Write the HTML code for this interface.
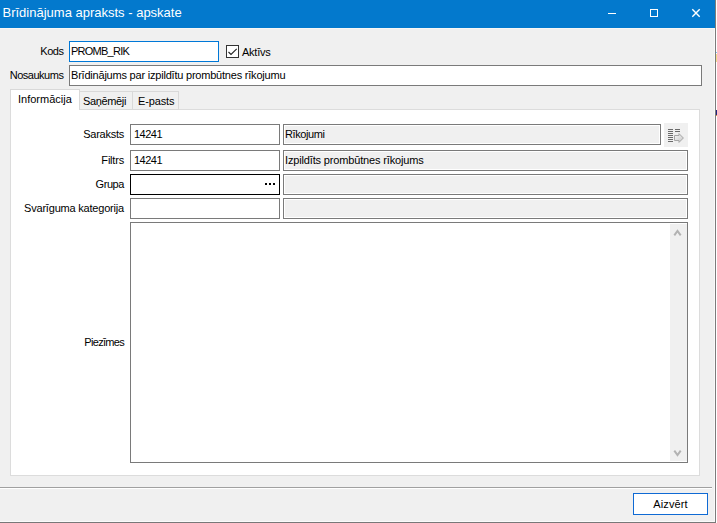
<!DOCTYPE html>
<html lang="lv">
<head>
<meta charset="utf-8">
<title>Brīdinājuma apraksts - apskate</title>
<style>
html,body{margin:0;padding:0;}
body{width:717px;height:523px;overflow:hidden;background:#fff;position:relative;
 font-family:"Liberation Sans",sans-serif;font-size:11px;color:#000;}
.abs{position:absolute;box-sizing:border-box;}
#win{left:0;top:0;width:715px;height:522px;background:#f0f0f0;}
#title{left:0;top:0;width:715px;height:28px;background:#0379cd;}
#ttext{left:2.5px;top:0;height:28px;line-height:25px;color:#fff;font-size:13px;white-space:nowrap;}
.t{position:absolute;white-space:nowrap;line-height:13px;height:13px;}
.r{text-align:right;}
.in{position:absolute;box-sizing:border-box;background:#fff;border:1px solid #7a7a7a;height:21px;}
.dis{position:absolute;box-sizing:border-box;background:#f0f0f0;border:1px solid #7a7a7a;box-shadow:inset 0 0 0 1px #fff;height:21px;}
</style>
</head>
<body>
<div id="win" class="abs"></div>
<div class="abs" style="left:715px;top:0;width:1px;height:523px;background:#7c7c7c"></div>
<div class="abs" style="left:0;top:521px;width:715px;height:1px;background:#fafafa"></div>
<div class="abs" style="left:714px;top:28px;width:1px;height:494px;background:#fafafa"></div>
<div class="abs" style="left:0;top:522px;width:716px;height:1px;background:#787878"></div>

<div class="abs" style="left:716px;top:54px;width:1px;height:8px;background:#f3dc8e"></div>
<div class="abs" style="left:716px;top:110px;width:1px;height:5px;background:#22227c"></div>
<div class="abs" style="left:716px;top:115px;width:1px;height:1px;background:#e0903c"></div>
<div class="abs" style="left:716px;top:52px;width:1px;height:1px;background:#7cc8f4"></div>
<div class="abs" style="left:0;top:28px;width:715px;height:1px;background:#f8f7f5"></div>
<div id="title" class="abs"></div>
<div id="ttext" class="abs"><span id="s_title">Brīdinājuma apraksts - apskate</span></div>
<!-- window buttons -->
<svg class="abs" style="left:600px;top:0" width="115" height="28" viewBox="0 0 115 28">
 <rect x="8" y="13" width="8" height="1" fill="#fff"/>
 <rect x="50.5" y="9.5" width="7" height="7" fill="none" stroke="#fff" stroke-width="1"/>
 <path d="M92.3 9.3 L99.7 16.7 M99.7 9.3 L92.3 16.7" stroke="#fff" stroke-width="1.4" fill="none"/>
</svg>

<!-- header fields -->
<div class="t r" style="left:0;width:63.4px;top:45px"><span id="s_kods" style="letter-spacing:-0.5px">Kods</span></div>
<div class="in" style="left:69px;top:41px;width:150px;border-color:#0078d7"></div>
<div class="t" style="left:71px;top:45px"><span id="s_promb" style="letter-spacing:-0.75px">PROMB_RIK</span></div>
<div class="abs" style="left:226px;top:45px;width:13px;height:13px;background:#fff;border:1px solid #333"></div>
<svg class="abs" style="left:226px;top:45px" width="13" height="13" viewBox="0 0 13 13"><path d="M2.5 7 L5 9.5 L10.7 3.8" stroke="#222" stroke-width="1.1" fill="none"/></svg>
<div class="t" style="left:242px;top:46px"><span id="s_aktivs" style="letter-spacing:-0.25px">Aktīvs</span></div>

<div class="t r" style="left:0;width:63.4px;top:69px"><span id="s_nos" style="letter-spacing:-0.5px">Nosaukums</span></div>
<div class="in" style="left:69px;top:65px;width:633px"></div>
<div class="t" style="left:71px;top:69px"><span id="s_nosv" style="letter-spacing:-0.21px">Brīdinājums par izpildītu prombūtnes rīkojumu</span></div>

<!-- tabs -->
<div class="abs" style="left:10px;top:109px;width:690px;height:367px;background:#fff;border:1px solid #dcdcdc"></div>
<div class="abs" style="left:79px;top:91px;width:54px;height:19px;background:#f0f0f0;border:1px solid #d9d9d9;border-left:none"></div>
<div class="abs" style="left:133px;top:91px;width:46px;height:19px;background:#f0f0f0;border:1px solid #d9d9d9;border-left:none"></div>
<div class="abs" style="left:10px;top:89px;width:70px;height:21px;background:#fff;border:1px solid #d9d9d9;border-bottom:none"></div>
<div class="t" style="left:18px;top:93px"><span id="s_tab1">Informācija</span></div>
<div class="t" style="left:83px;top:95px"><span id="s_tab2" style="letter-spacing:-0.36px">Saņēmēji</span></div>
<div class="t" style="left:138px;top:95px"><span id="s_tab3" style="letter-spacing:-0.14px">E-pasts</span></div>

<!-- rows -->
<div class="t r" style="left:0;width:124px;top:128px"><span id="s_sar" style="letter-spacing:-0.26px">Saraksts</span></div>
<div class="in" style="left:130px;top:124px;width:150px"></div>
<div class="t" style="left:134px;top:128px"><span id="s_n1" style="letter-spacing:-0.5px">14241</span></div>
<div class="dis" style="left:283px;top:124px;width:378px"></div>
<div class="t" style="left:285px;top:128px"><span id="s_rik" style="letter-spacing:-0.42px">Rīkojumi</span></div>
<div class="abs" style="left:664px;top:123px;width:24px;height:24px;background:#f0f0f0"></div>
<svg class="abs" style="left:664px;top:123px" width="24" height="24" viewBox="0 0 24 24">
 <g fill="#6a6a6a">
 <rect x="4" y="6" width="5" height="1"/><rect x="4" y="8" width="5" height="1"/><rect x="4" y="10" width="5" height="1"/>
 <rect x="4" y="12" width="5" height="1"/><rect x="4" y="14" width="5" height="1"/><rect x="4" y="16" width="5" height="1"/><rect x="4" y="18" width="5" height="1"/>
 <rect x="11" y="6" width="5" height="1"/><rect x="11" y="8" width="5" height="1"/>
 </g>
 <defs><linearGradient id="ag" x1="0" y1="0" x2="1" y2="1"><stop offset="0" stop-color="#fafafa"/><stop offset="1" stop-color="#c4c4c4"/></linearGradient></defs>
 <path d="M10.5 12.5 H15 V10.6 L19.4 15 L15 19.4 V17.5 H10.5 Z" fill="url(#ag)" stroke="#a6a6a6" stroke-width="1"/>
</svg>

<div class="t r" style="left:0;width:124px;top:154px"><span id="s_fil" style="letter-spacing:-0.2px">Filtrs</span></div>
<div class="in" style="left:130px;top:150px;width:150px"></div>
<div class="t" style="left:134px;top:154px"><span id="s_n2" style="letter-spacing:-0.5px">14241</span></div>
<div class="dis" style="left:283px;top:150px;width:405px"></div>
<div class="t" style="left:285px;top:154px"><span id="s_izp" style="letter-spacing:-0.155px">Izpildīts prombūtnes rīkojums</span></div>

<div class="t r" style="left:0;width:124px;top:178px"><span id="s_gru" style="letter-spacing:-0.42px">Grupa</span></div>
<div class="in" style="left:130px;top:174px;width:150px;border-color:#000"></div>
<div class="abs" style="left:265px;top:183px;width:2px;height:2px;background:#000"></div>
<div class="abs" style="left:269px;top:183px;width:2px;height:2px;background:#000"></div>
<div class="abs" style="left:273px;top:183px;width:2px;height:2px;background:#000"></div>
<div class="dis" style="left:283px;top:174px;width:405px"></div>

<div class="t r" style="left:0;width:124px;top:202px"><span id="s_sva" style="letter-spacing:-0.2px">Svarīguma kategorija</span></div>
<div class="in" style="left:130px;top:198px;width:150px"></div>
<div class="dis" style="left:283px;top:198px;width:405px"></div>

<div class="t r" style="left:0;width:124px;top:336px"><span id="s_pie" style="letter-spacing:-0.7px">Piezīmes</span></div>
<div class="in" style="left:130px;top:222px;width:558px;height:241px"></div>
<div class="abs" style="left:670px;top:224px;width:17px;height:237px;background:#f0f0f0"></div>
<svg class="abs" style="left:670px;top:224px" width="17" height="237" viewBox="0 0 17 237">
 <path d="M4.3 11.3 L7.5 7 L10.7 11.3" stroke="#b2b2b2" stroke-width="2" fill="none"/>
 <path d="M4.3 226.7 L7.5 231 L10.7 226.7" stroke="#b2b2b2" stroke-width="2" fill="none"/>
</svg>

<!-- bottom -->
<div class="abs" style="left:0;top:487px;width:712px;height:1px;background:#a0a0a0"></div>
<div class="abs" style="left:0;top:488px;width:712px;height:1px;background:#fff"></div>
<div class="abs" style="left:633px;top:493px;width:75px;height:22px;background:#fff;border:1px solid #0f6ad4"></div>
<div class="t" style="left:633px;width:75px;top:498px;text-align:center"><span id="s_aiz" style="letter-spacing:0.1px">Aizvērt</span></div>
</body>
</html>
